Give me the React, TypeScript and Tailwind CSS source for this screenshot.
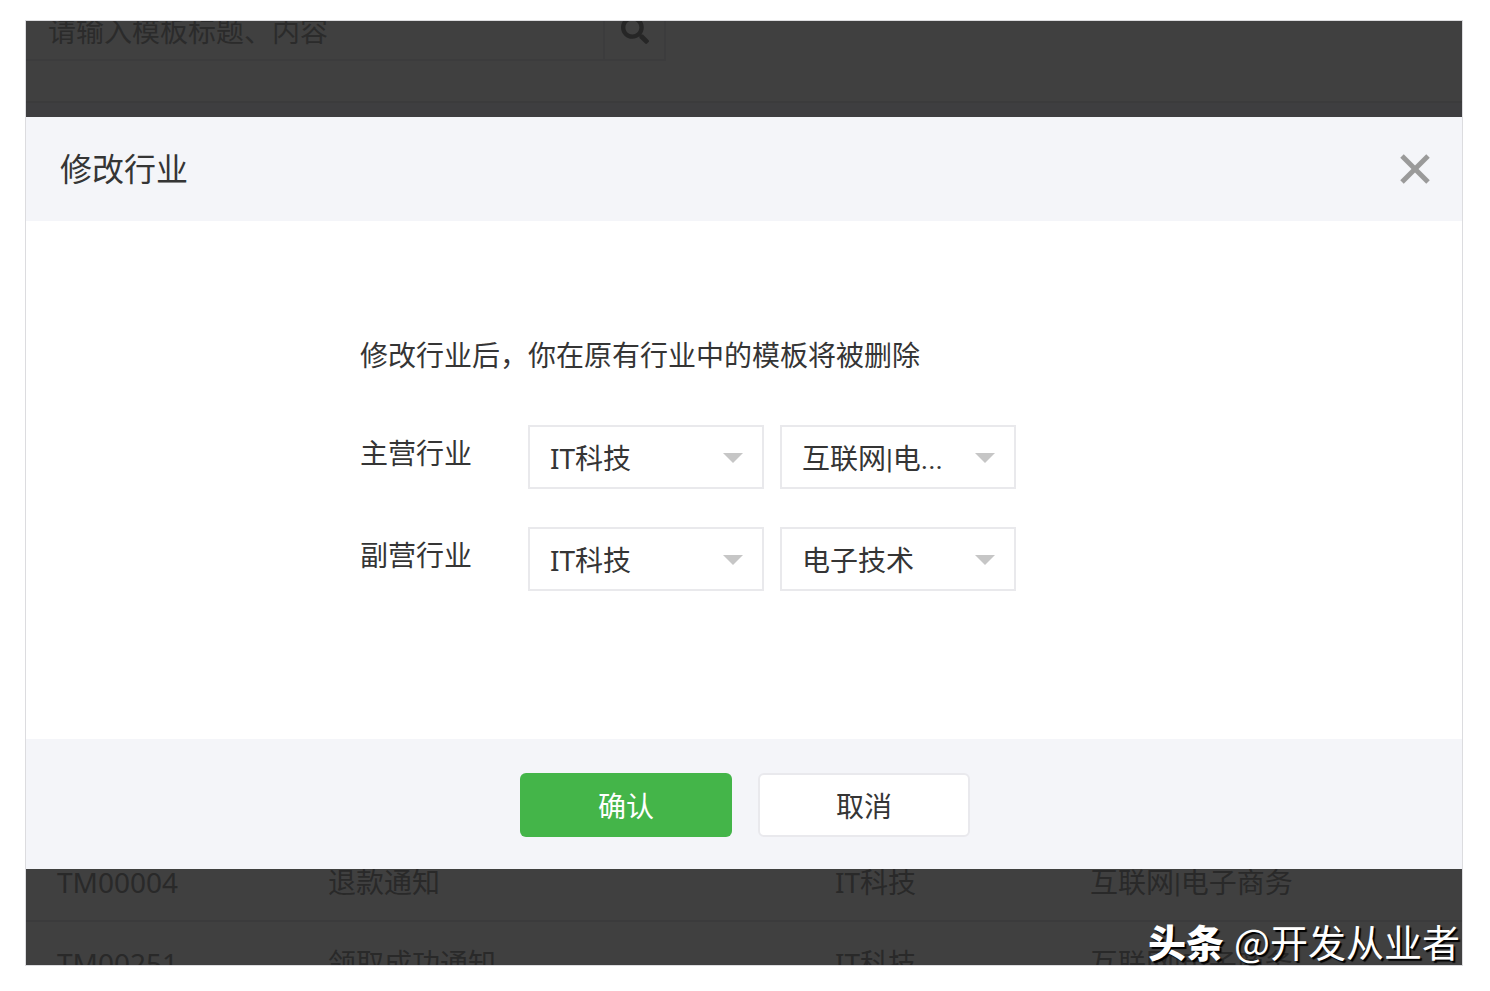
import { X } from 'lucide-react';
import { FaSearch } from 'react-icons/fa';

const ROWS = [
  { id: 'TM00004', title: '退款通知', primary: 'IT科技', secondary: '互联网|电子商务' },
  { id: 'TM00251', title: '领取成功通知', primary: 'IT科技', secondary: '互联网|电子商务' },
];

const FIELDS = [
  { id: 'main', label: '主营行业', primary: 'IT科技', secondary: '互联网|电...' },
  { id: 'sub', label: '副营行业', primary: 'IT科技', secondary: '电子技术' },
];

// Roboto has the narrow "|" used between industry names
const NARROW = "font-['Roboto','Noto_Sans_CJK_SC',sans-serif]";

function IndustrySelect({
  id,
  label,
  value,
  className,
}: {
  id: string;
  label?: string;
  value: string;
  className: string;
}) {
  return (
    <div className="relative w-[236px]">
      <select
        id={id}
        aria-label={label}
        defaultValue={value}
        className={`block h-16 w-full appearance-none border-2 border-[#e9e9ec] bg-white pr-12 pl-5 text-[28px] text-[#353535] outline-none ${className}`}
      >
        <option value={value}>{value}</option>
      </select>
      <svg
        viewBox="0 0 20 10"
        className="pointer-events-none absolute top-7 right-[21px] h-[10px] w-5 fill-[#c6c6c6]"
      >
        <path d="M0 0h20L10 10z" />
      </svg>
    </div>
  );
}

/** Search bar of the page underneath, cut off by the top of the frame. */
function SearchStrip() {
  return (
    <div className="flex h-24 flex-col justify-end overflow-hidden bg-[#404040]">
      <div className="flex h-[60px] w-[640px] shrink-0 border-r-2 border-b-2 border-[#3c3c3d]">
        <input
          type="text"
          aria-label="搜索模板"
          placeholder="请输入模板标题、内容"
          className="min-w-0 flex-1 bg-transparent pt-0.5 pl-[22px] text-[28px] text-[#2b2b2b] outline-none placeholder:text-[#2b2b2b]"
        />
        <button
          type="button"
          aria-label="搜索"
          className="flex w-[61px] items-center justify-center border-l-2 border-[#3c3c3d]"
        >
          <FaSearch size={28} className="text-[#262626]" />
        </button>
      </div>
      <div className="h-10 shrink-0" />
      <div className="h-4 shrink-0 border-t-2 border-[#3b3b3c] bg-[#3e3e40]" />
    </div>
  );
}

/** Template list of the page underneath, partly hidden by the dialog. */
function TemplateTable() {
  return (
    <div className="h-24 overflow-hidden bg-[#404040]">
      <table className="-mt-7 w-full table-fixed text-left text-[28px] leading-10 text-[#292929]">
        <tbody>
          {ROWS.map((row) => (
            <tr key={row.id} className="h-20 border-b-2 border-[#3b3b3c] align-baseline">
              <td className="w-[302px] pt-[21px] pl-[31px]">{row.id}</td>
              <td className="w-[507px]">{row.title}</td>
              <td className="w-[255px]">{row.primary}</td>
              <td className={NARROW}>{row.secondary}</td>
            </tr>
          ))}
        </tbody>
      </table>
    </div>
  );
}

function IndustryDialog() {
  return (
    <section role="dialog" aria-labelledby="dialog-title" className="bg-white text-[#353535]">
      <header className="flex h-[104px] items-center justify-between bg-[#f4f5f9] pr-[21px] pl-[34px]">
        <h2 id="dialog-title" className="text-[32px] leading-10">
          修改行业
        </h2>
        <button type="button" aria-label="关闭" className="text-[#9a9a9a]">
          <X size={52} strokeWidth={2.25} strokeLinecap="butt" />
        </button>
      </header>

      <div className="mx-auto max-w-3xl pt-[114px] pb-[148px]">
        <p className="text-[28px] leading-10">修改行业后，你在原有行业中的模板将被删除</p>
        <div className="mt-[50px] flex flex-col gap-[38px]">
          {FIELDS.map((f) => (
            <div key={f.id} className="flex items-start gap-4">
              <label htmlFor={f.id} className="w-[152px] text-[28px] leading-14">
                {f.label}
              </label>
              <IndustrySelect id={f.id} value={f.primary} className="pt-0.5" />
              <IndustrySelect
                id={`${f.id}-detail`}
                label={`${f.label}分类`}
                value={f.secondary}
                className={`pt-1.5 ${NARROW}`}
              />
            </div>
          ))}
        </div>
      </div>

      <footer className="flex justify-center gap-[26px] bg-[#f4f5f9] pt-[34px] pb-8 pl-0.5 text-[28px]">
        <button type="button" className="h-16 w-[212px] rounded-md bg-[#44b549] pt-0.5 text-white">
          确认
        </button>
        <button
          type="button"
          className="h-16 w-[212px] rounded-md border-2 border-[#e9e9ed] bg-white pt-0.5"
        >
          取消
        </button>
      </footer>
    </section>
  );
}

export default function App() {
  return (
    <div className="min-h-screen bg-white pt-5 pr-[27px] pb-6 pl-[25px] font-['Noto_Sans','Noto_Sans_CJK_SC',sans-serif]">
      <main className="relative border border-[#dcdcdf]">
        <SearchStrip />
        <IndustryDialog />
        <TemplateTable />
        <div className="absolute right-0.5 bottom-0 flex gap-2.5 font-['Noto_Sans_CJK_SC',sans-serif] text-[38px] leading-12 whitespace-nowrap text-white [text-shadow:2px_2px_1px_#000]">
          <span className="font-black">头条</span>
          <span>@开发从业者</span>
        </div>
      </main>
    </div>
  );
}
